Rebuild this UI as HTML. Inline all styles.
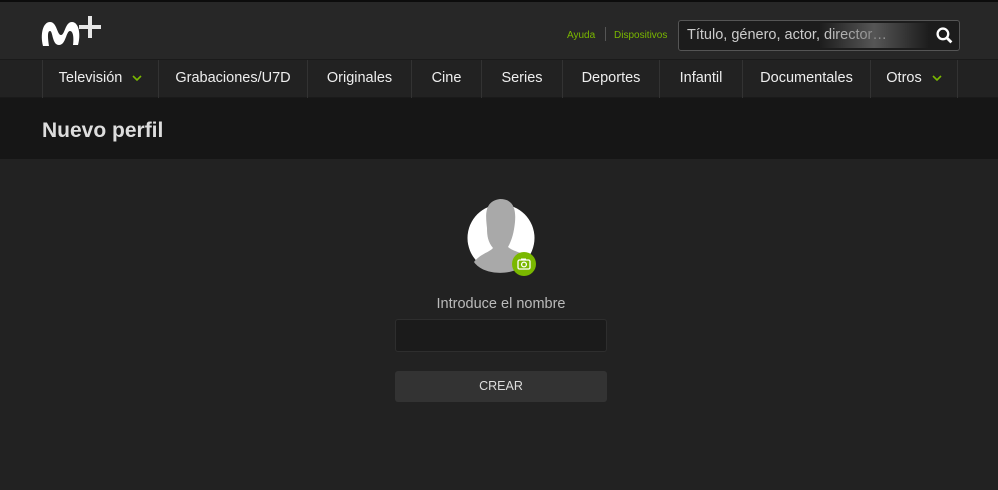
<!DOCTYPE html><html><head><style>
body{margin:0;width:998px;height:490px;background:#222;font-family:"Liberation Sans",sans-serif;overflow:hidden;position:relative}
.top{position:absolute;left:0;top:0;width:998px;height:2px;background:#0c0c0c}
.hdr{position:absolute;left:0;top:2px;width:998px;height:57px;background:#272727}
.nav{position:absolute;left:0;top:59px;width:998px;height:39px;background:#222;border-top:1px solid #1a1a1a;border-bottom:1px solid #1a1a1a;box-sizing:border-box}
.nav div{position:absolute;top:0;height:38px;line-height:37px;text-align:center;color:#eee;font-size:14.5px;border-left:1px solid #333;box-sizing:border-box}
.band{position:absolute;left:0;top:98px;width:998px;height:61px;background:#161616}
.band h1{margin:0;position:absolute;left:42px;top:21px;font-size:21px;color:#ddd;font-weight:bold}
.lk{position:absolute;top:28px;font-size:10px;color:#7ab800}
.search{position:absolute;left:678px;top:18px;width:282px;height:31px;border:1px solid #555;border-radius:3px;background:#1c1c1c;box-sizing:border-box}
.chev{display:inline-block;margin-left:10px;vertical-align:middle}
</style></head><body>
<div class="top"></div>
<div class="hdr">
<svg style="position:absolute;left:40px;top:12px" width="64" height="36" viewBox="0 0 64 36"><path d="M3 32 C0 20 3 8 10 8 C17 8 17 21 21 21 C25 21 25 8 32 8 C39 8 41 21 38 31 L33 31 C34 23 33 17 30 17 C26 17 26 31 19 31 C12 31 13 17 10 17 C7 17 8 25 9 32 Z" fill="#fff"/><path d="M48 2h4v9h9v4h-9v9h-4v-9h-9v-4h9z" fill="#e6e6e6"/></svg>
<span class="lk" style="left:567px">Ayuda</span>
<span style="position:absolute;left:605px;top:25px;width:1px;height:14px;background:#555"></span>
<span class="lk" style="left:614px">Dispositivos</span>
<div class="search"><span style="position:absolute;left:8px;top:6px;color:#ccc;font-size:14.5px">Título, género, actor, director…</span>
<div style="position:absolute;left:140px;top:2px;width:110px;height:25px;background:linear-gradient(90deg,rgba(28,28,28,0),rgba(110,110,110,.7),rgba(28,28,28,0))"></div>
<svg style="position:absolute;left:257px;top:6px" width="17" height="17" viewBox="0 0 16 16"><circle cx="6.5" cy="6.5" r="5" stroke="#fff" stroke-width="2.2" fill="none"/><path d="M10 10l4.5 4.5" stroke="#fff" stroke-width="2.6"/></svg></div>
</div>
<div class="nav">
<div style="left:42px;width:116px">Televisión<svg class="chev" width="10" height="7" viewBox="0 0 10 7"><path d="M1 1l4 4 4-4" stroke="#7ab800" stroke-width="1.6" fill="none"/></svg></div>
<div style="left:158px;width:149px">Grabaciones/U7D</div>
<div style="left:307px;width:104px">Originales</div>
<div style="left:411px;width:70px">Cine</div>
<div style="left:481px;width:81px">Series</div>
<div style="left:562px;width:97px">Deportes</div>
<div style="left:659px;width:83px">Infantil</div>
<div style="left:742px;width:128px">Documentales</div>
<div style="left:870px;width:88px;border-right:1px solid #333">Otros<svg class="chev" width="10" height="7" viewBox="0 0 10 7"><path d="M1 1l4 4 4-4" stroke="#7ab800" stroke-width="1.6" fill="none"/></svg></div>
</div>
<div class="band"><h1>Nuevo perfil</h1></div>
<svg style="position:absolute;left:460px;top:196px" width="90" height="85" viewBox="0 0 90 85"><circle cx="41" cy="42" r="33.5" fill="#fff"/><path d="M14 66 C20 58 30 56 33 52 C28 46 27 40 27 32 C26 22 23 5 40 3 C54 3 56 14 55 26 C54 36 52 44 48 51 C54 56 64 57 70 62 C62 80 25 82 14 66Z" fill="#a9a9a9"/><circle cx="64" cy="68" r="12" fill="#7ab800"/><rect x="58" y="64" width="12" height="9" rx="1.5" fill="none" stroke="#fff" stroke-width="1.3"/><circle cx="64" cy="68.5" r="2.4" fill="none" stroke="#fff" stroke-width="1.3"/><rect x="61" y="62.5" width="5" height="2" fill="#fff"/></svg>
<div style="position:absolute;left:395px;top:296px;width:212px;text-align:center;color:#bbb;font-size:14.5px">Introduce el nombre</div>
<div style="position:absolute;left:395px;top:319px;width:212px;height:33px;background:#1b1b1b;border:1px solid #2e2e2e;border-radius:3px;box-sizing:border-box"></div>
<div style="position:absolute;left:395px;top:371px;width:212px;height:31px;background:#333;border-radius:3px;color:#ddd;font-size:12.5px;text-align:center;line-height:31px">CREAR</div>
</body></html>
